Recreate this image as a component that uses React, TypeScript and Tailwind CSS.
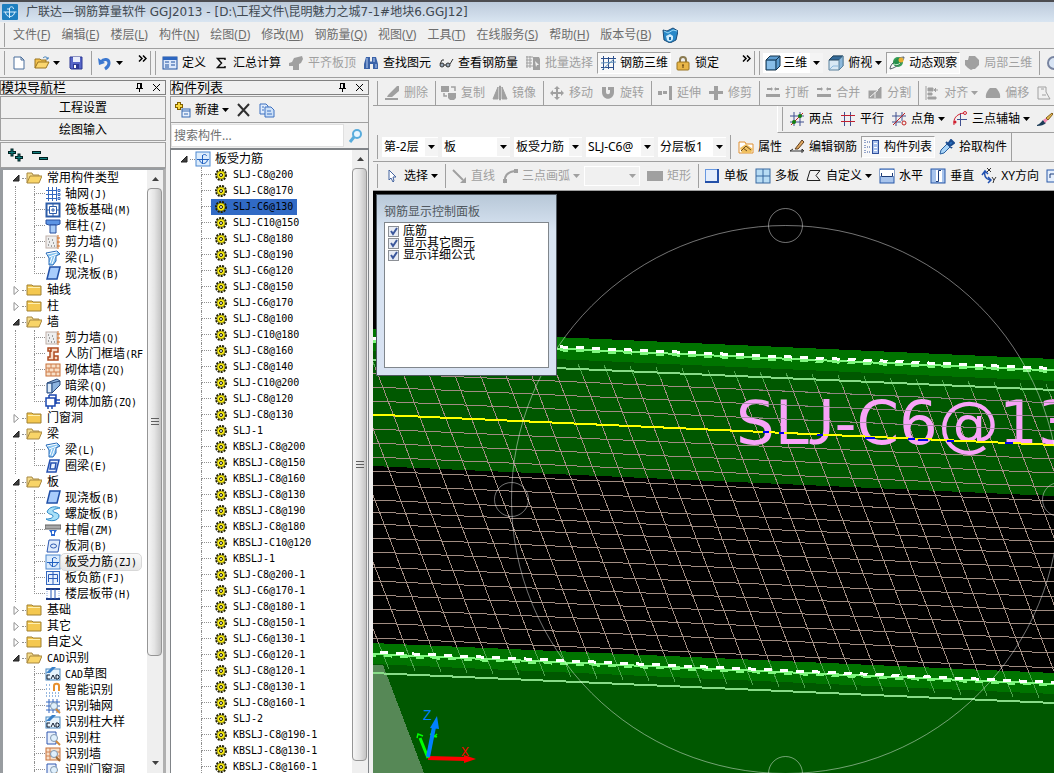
import React from "react";

type IconProps = { children: React.ReactNode };

const Svg: React.FC<IconProps> = ({ children }) => (
    <svg viewBox="0 0 16 16" className="h-4 w-4 shrink-0" fill="none" aria-hidden="true">
        {children}
    </svg>
);

// disabled toolbar grey
const G = "#a0a0a0";

const icons: Record<string, React.ReactNode> = {
    app: (
        <>
            <rect width="16" height="16" rx="1" fill="#1e7fc0" />
            <path d="M1.500 8h13M7.500 4v10M7.500 5c0-3 4-3 4 0M3.500 8c0 6 9 6 9 0M5 5h2" stroke="#d8f0ff" />
        </>
    ),
    newDoc: <path d="M3 2h7l3 3v9H3zM10 2v3h3" fill="#fff" stroke="#4a6f9c" />,
    open: (
        <>
            <path d="M1 13V4h5l1 1h5v3" fill="#f4c24c" stroke="#9a7420" />
            <path d="M1 13l3-6h11l-3 6z" fill="#fbd66e" stroke="#9a7420" />
            <path d="M9 3c2-2 4-1 5 1M14 2v2h-2" stroke="#3c7cb8" />
        </>
    ),
    save: (
        <>
            <path d="M2 2h12v12H3l-1-1z" fill="#5766c8" stroke="#2c3894" />
            <rect x="5" y="2" width="7" height="5" fill="#e8ecfa" />
            <rect x="5" y="9" width="6" height="5" fill="#2c3894" />
            <rect x="6" y="10" width="2" height="3" fill="#fff" />
        </>
    ),
    undo: (
        <>
            <path d="M4 7c3-4 8-3 8 1 0 3-1 4-4 6" stroke="#3c78d0" strokeWidth="3" />
            <path d="M1 3l1 7 6-2z" fill="#3c78d0" />
        </>
    ),
    define: (
        <>
            <rect x="1" y="2" width="14" height="12" fill="#dce8fa" stroke="#1c50a0" />
            <rect x="1" y="2" width="14" height="3" fill="#2c66c0" />
            <path d="M3 7h4M3 10h4M9 7h4M9 10h4M3 12h4" stroke="#1c50a0" />
        </>
    ),
    sigma: <path d="M12 5V3.500H4.500l4 4.500-4 4.500H12V11" stroke="#111" strokeWidth="1.500" />,
    alignTop: <path d="M1 8l3-1 2-4 8-2 1 3-2 4-2 1v6H5v-4H1z" fill={G} />,
    find: (
        <>
            <path d="M3 2h4v4l1 1 1-1V2h4l2 7v5h-5V9H7v5H1V9z" fill="#3a62a8" />
            <path d="M4 3v10M11 3v4M13 9v4" stroke="#b8d0f4" />
        </>
    ),
    glasses: (
        <>
            <circle cx="4" cy="10" r="2" fill="#9ab" stroke="#333" />
            <circle cx="10" cy="10" r="2" fill="#9ab" stroke="#333" />
            <path d="M6 10h2M2 9l2-4h2M12 9l3-5" stroke="#333" />
        </>
    ),
    batch: (
        <>
            <path d="M1 2h7M1 5h6M1 8h6M1 11h7M2 1v12M5 1v12" stroke={G} />
            <path d="M8 2h6l1 2v11H8z" fill={G} />
            <path d="M10 6l4 4h-2l-1 2z" fill="#f0f0f0" />
        </>
    ),
    rebar3d: (
        <>
            <path d="M1 3.500h15M1 12.500h13M3.500 1v14M8.500 2v12M13.500 1v14" stroke="#2c4f8c" />
            <path d="M1 8l15-1M2 15l12-11" stroke="#5c8cb8" />
        </>
    ),
    lock: (
        <>
            <path d="M5 8V5c0-4 6-4 6 0v3" stroke="#8a7a50" strokeWidth="2" />
            <rect x="2" y="7" width="12" height="8" rx="1" fill="#e8b648" stroke="#9a7420" />
            <path d="M8 10v3M7 10h2" stroke="#604010" />
        </>
    ),
    cube: (
        <>
            <path d="M1 5l4-4h10v10l-4 4H1z" fill="#5c9cd0" stroke="#14344c" />
            <path d="M1 5h10v10M11 5l4-4" stroke="#14344c" />
            <path d="M2 6h8v8H2z" fill="#88bee8" />
        </>
    ),
    cubeTop: (
        <>
            <path d="M1 5l4-4h10v10l-4 4H1z" fill="#d8e8f4" stroke="#58809c" />
            <path d="M1 5l4-4h10l-4 4z" fill="#346a98" stroke="#24445c" />
            <path d="M11 5v10l4-4V1z" fill="#8cb8dc" stroke="#58809c" />
            <path d="M2 14l3-3h5" stroke="#8cb8dc" />
        </>
    ),
    orbit: (
        <>
            <circle cx="9" cy="7" r="5" fill="#38a058" />
            <path d="M1 14C1 9 9 2 15 2c0 4-8 11-14 12z" stroke="#505c64" strokeWidth="1" />
            <path d="M4 8c1-3 4-5 7-5 1 4-1 8-5 8z" fill="#28904c" />
            <circle cx="12" cy="5" r="2.500" fill="#e8b030" />
            <path d="M5 9c2 1 4 1 6-1" stroke="#c8f4d0" />
        </>
    ),
    local3d: <path d="M5 1h6l4 4v5l-4 4H9l-2 1-3-2-3-3V5h3z" fill={G} />,
    zoomIcon: <circle cx="9" cy="8" r="6" fill="#d8e4f4" stroke="#7884a0" strokeWidth="2" />,
    del: <path d="M1 13h13v2H1zM4 10L13 1h2v5l-7 6H3z" fill={G} />,
    copy: (
        <>
            <rect x="0" y="1" width="8" height="6" fill={G} />
            <path d="M7 8h8v5l-2 2H9l-2-2z" fill={G} />
            <path d="M10 2h4v4M3 8v3h3" stroke={G} strokeWidth="1.500" />
        </>
    ),
    mirror: <path d="M6 2v12H1zM7.500 1h1v14h-1zM10 2v12h5zM11.500 8v4" fill={G} stroke={G} />,
    move: <path d="M8 1l3 3H9v3h3V5l3 3-3 3V9H9v3h2l-3 3-3-3h2V9H4v2L1 8l3-3v2h3V4H5z" fill={G} />,
    rotate: <path d="M2 2h4v5c0 3 4 3 4 0V5H8V2h6v5c0 9-12 9-12 0z" fill={G} />,
    extend: <path d="M1 6h4v4H1zM6 6h4v3H6zM12 1h3v14h-3z" fill={G} />,
    trim: <path d="M6 1h4v5h5v3h-5v6H6V9H1V6h5z" fill={G} />,
    breakI: <path d="M2 3h4V2l2 2-2 2V5H2zM14 3h-3V2L9 4l2 2V5h3zM1 9h14v3H1z" fill={G} />,
    merge: <path d="M1 3h4V2l2 2-2 2V5H1zM15 3h-3V2l-2 2 2 2V5h3zM1 9h14v3H1z" fill={G} />,
    split: <path d="M1 5h9l4-4 1 1v12H1zM3 12l8-7M8 13V7" fill={G} stroke="#f0f0f0" />,
    align: <path d="M2 1v14M4 3h5v3H4zM4 8h4v2H4zM4 12h8v2H4zM12 3l-2 2 2 2M14 5h-4" stroke={G} fill={G} />,
    offset: <path d="M1 13c-1-4 2-8 4-10h6c2 2 5 6 4 10z" fill={G} />,
    shape: <path d="M2 2h8v5l4 7H2zM5 4h3M6 10h4" stroke={G} />,
    twoPt: (
        <>
            <path d="M5 1v14M11 1v14M1 5h14M1 11h14" stroke="#405090" />
            <path d="M2 14L14 2" stroke="#c02020" />
            <circle cx="5" cy="11" r="2" fill="#108010" />
            <circle cx="11" cy="5" r="2" fill="#108010" />
        </>
    ),
    parallel: (
        <>
            <path d="M4.500 1v14M10.500 1v14" stroke="#405090" />
            <path d="M1 4.500h14M1 10.500h14" stroke="#c02030" />
        </>
    ),
    ptAngle: (
        <>
            <path d="M5 1v14M11 1v9M1 5h14M1 11h9" stroke="#405090" />
            <path d="M2 14L14 2" stroke="#c02020" />
            <circle cx="13" cy="12" r="2" stroke="#c02020" />
        </>
    ),
    arcAxis: (
        <>
            <path d="M8.500 2v13M5 8.500h10" stroke="#405090" />
            <path d="M2 14C1 8 4 3 12 2" stroke="#d02030" />
            <circle cx="3" cy="11" r="1.500" fill="#d02030" />
            <circle cx="13" cy="2" r="1.500" stroke="#d02030" />
        </>
    ),
    brush: (
        <>
            <path d="M0 14c3-1 5-4 6-5l3 3c-2 2-5 3-9 3z" fill="#1c3c58" />
            <path d="M6 9l2 3 3-3-2-2z" fill="#f088b0" />
            <path d="M9 7l2 2 5-6-1-1z" fill="#e8b850" stroke="#806020" />
        </>
    ),
    prop: (
        <>
            <path d="M1 14V3h6l1 2h7v9z" fill="#fff" stroke="#e09030" />
            <path d="M2 9l6-4 7 5-2 4H4z" fill="#f0c060" />
            <path d="M3 12l5-5 5 4M5 9l4 3" stroke="#705020" />
        </>
    ),
    edit: (
        <>
            <path d="M1 12h14l-2-2M1 12l3-2M13 10v4" stroke="#303030" />
            <path d="M6 10l7-9 2 2-6 7z" fill="#e0a860" stroke="#604020" />
        </>
    ),
    listI: (
        <>
            <path d="M3 3h3M3 8h3M3 13h3M1 1v4M1 6v4M1 11v4" stroke="#30509c" strokeDasharray="1 1" />
            <rect x="8.500" y="1.500" width="6" height="13" fill="#a8c0ec" stroke="#30509c" />
            <path d="M10 4.500h3M10 8.500h3M10 11.500h3" stroke="#fff" />
        </>
    ),
    dropper: (
        <>
            <path d="M1 15l1-4 6-6 3 3-6 6z" fill="#a8d4f8" stroke="#2860a0" />
            <path d="M7 3l6 6M9 5l3-4 3 3-4 3z" stroke="#1c4c90" strokeWidth="2" fill="#2870c0" />
        </>
    ),
    cursor: <path d="M5 2v10l2-2 2 4 1-1-1-4h3z" fill="#fff" stroke="#4464a0" />,
    lineI: (
        <>
            <path d="M2 2l10 10" stroke={G} strokeWidth="2" />
            <path d="M15 15H9l6-6z" fill={G} />
        </>
    ),
    arc: (
        <>
            <path d="M3 15C2 8 5 4 13 3" stroke={G} strokeWidth="2" />
            <path d="M1 11h4v4H1zM12 1h4v4h-4z" fill={G} />
        </>
    ),
    rectI: <rect y="3" width="16" height="10" fill={G} />,
    single: (
        <>
            <rect x="1.500" y="1.500" width="13" height="12" fill="#e4eefc" stroke="#6898e0" />
            <path d="M1 14h14M14 1v13" stroke="#2450a8" strokeWidth="2" />
        </>
    ),
    multi: (
        <>
            <rect x="1" y="1" width="14" height="14" fill="#b8dcf4" stroke="#3868a0" />
            <path d="M8 1v14M1 8h14" stroke="#3868a0" />
        </>
    ),
    poly: <path d="M1 12.500L4 2.500h10l-4 5 4 5z" stroke="#202020" />,
    horiz: (
        <>
            <rect x="1" y="1" width="14" height="14" fill="#a8c4ec" stroke="#2858a8" />
            <path d="M1 2h14v6H1z" fill="#fff" />
            <path d="M2.500 5v3.500h11V5" stroke="#1c3c78" />
        </>
    ),
    vert: (
        <>
            <rect x="1" y="1" width="14" height="14" fill="#a8c4ec" stroke="#2858a8" />
            <path d="M6 2h6v12H6z" fill="#fff" />
            <path d="M11 2.500H8.500v11H6" stroke="#1c3c78" />
        </>
    ),
    xy: (
        <>
            <path d="M4 3c-1 4 0 8 5 9M1 7l3-4 3 3M7 9l3 3-3 3" stroke="#2050b0" strokeWidth="1.500" />
            <path d="M6 0l4 4M10 0L6 4M11 9l2 3 2-3M13 12l-1 3" stroke="#333" />
        </>
    ),
    loop: (
        <>
            <rect x="1" y="2" width="14" height="12" fill="#e4eefc" stroke="#2858a8" />
            <path d="M4 10V6h10" stroke="#1c3c78" />
        </>
    ),
    folderOpen: (
        <>
            <path d="M1 13V3h5l1 2h6v2" fill="#f4dc8c" stroke="#a88840" />
            <path d="M1 13l3-7h12l-3 7z" fill="#f8d468" stroke="#a88840" />
        </>
    ),
    folder: (
        <>
            <path d="M1 13V3h5l1 1h8v9z" fill="#f4c850" stroke="#a08030" />
            <path d="M2 5.500h12" stroke="#fff0b0" />
        </>
    ),
    axis: (
        <path
            d="M3.500 1v14M7.500 1v14M11.500 1v14M1 4.500h11M1 8.500h11M1 12.500h11M13 3.500h2v2h-2zM13 7.500h2v2h-2zM13 11.500h2v2h-2z"
            stroke="#3468c0"
        />
    ),
    raft: (
        <>
            <rect x="1.500" y="1.500" width="13" height="13" fill="#fff" stroke="#2c5ca8" strokeWidth="2" />
            <path d="M4.500 4.500h7v7h-7zM7 7h2v2H7zM8 1v3M8 12v3M1 8h3M12 8h3" stroke="#2c5ca8" />
        </>
    ),
    column: (
        <>
            <path d="M1 2h14v4l-3 1H4L1 6z" fill="#5c94e4" stroke="#2850a0" />
            <path d="M5 7h6v8H5z" fill="#a8ccf8" stroke="#2850a0" />
        </>
    ),
    shear: (
        <>
            <rect x="1" y="2" width="11" height="12" fill="#eee" stroke="#c0b0a8" />
            <path d="M3 11h1M6 12h1M8 9h1M4 8h1M9 12h1M3 5h1M7 6h1" stroke="#505050" />
            <path d="M13 1v14M12 4h3M12 8h3M12 12h3" stroke="#d07028" />
        </>
    ),
    beam: (
        <>
            <path d="M1 3l11-2 3 3-4 2v5l-3 4H4V8z" fill="#88c4f0" stroke="#2c6cb8" />
            <path d="M2 4l10-2M4 7l8-3M7 7l-2 6M10 6l-3 8" stroke="#fff" />
        </>
    ),
    slab: <path d="M5 1h10l-3 12H2z" fill="#a8ccfc" stroke="#2050a8" strokeWidth="1.500" />,
    door: (
        <path d="M3 2h10v4H9v4h4v4H3v-3h2V5H3zM6 2v4M9 10v4" fill="#f8dcc8" stroke="#b04c20" strokeWidth="1.500" />
    ),
    brick: (
        <>
            <rect x="1" y="2" width="14" height="12" fill="#f8e0c8" stroke="#c87038" />
            <path d="M1 6h14M1 10h14M6 2v4M11 2v4M4 6v4M9 6v4M6 10v4M11 10v4" stroke="#d08050" />
        </>
    ),
    hidden: (
        <>
            <path d="M2 5l10-4 3 2v4l-8 8H2z" fill="#8cb4e0" stroke="#284878" />
            <path d="M2 5h5v10M7 5l8-2" stroke="#284878" />
            <path d="M3 6h3v8H3z" fill="#e0ecf8" />
        </>
    ),
    rebarWall: (
        <path d="M1 4h9v8H1zM4 1h7v9M4 1v3M10 6h5M10 9h5M3 12v3M7 12v3" stroke="#1c48b0" strokeWidth="1.500" />
    ),
    ring: <path d="M5 2h9l-3 12H2zM6 5h5l-1 6H5z" fill="#e8f0ff" stroke="#2450b0" strokeWidth="1.500" />,
    spiral: (
        <path
            d="M2 6c2-6 9-6 13-4-4 1-7 1-7 3s6 1 6 5c0 5-9 6-13 3 4 0 7-1 7-3s-4-1-6-4z"
            fill="#a8e0f8"
            stroke="#2c88c8"
        />
    ),
    cap: (
        <>
            <path d="M0 3h16v4H0z" fill="#a8a8a8" stroke="#606060" />
            <path d="M4 8h8l-2 3v3H6v-3z" fill="#2c68d0" />
            <path d="M7 9h2v3H7z" fill="#fff" />
        </>
    ),
    hole: (
        <>
            <path d="M4 2h11l-2 12H2z" fill="#e0ecfc" stroke="#2c58b0" />
            <ellipse cx="8.500" cy="8" rx="3" ry="2" stroke="#2c58b0" />
        </>
    ),
    force: (
        <>
            <rect x="1" y="1" width="14" height="14" fill="#dcecfc" stroke="#4c88d0" />
            <path d="M2 8.500h12M7.500 4v9M7.500 5c0-2 4-2 4 0M4.500 8c0 6 8 6 8 0" stroke="#2060c0" />
        </>
    ),
    negative: (
        <>
            <rect x="1.500" y="1.500" width="13" height="13" fill="#e8f2fe" stroke="#3468c0" />
            <path d="M8 2v12M3.500 12V4.500h9V12M3 8.500h10" stroke="#2c5cb8" />
        </>
    ),
    strip: (
        <>
            <path d="M1 3h14M1 13h14" stroke="#1c3c88" strokeWidth="2" />
            <path d="M6 3v10M10 3v10" stroke="#2c5cb8" />
            <path d="M2 5v8M14 5v8" stroke="#88a8e0" strokeDasharray="1 1" />
        </>
    ),
    cad: (
        <>
            <rect x="1" y="3" width="14" height="11" fill="#e8f4fc" stroke="#4888c0" />
            <path d="M1 7L7 1h4L5 7z" fill="#3880c8" />
            <path d="M5 9H2v4h3M6 13l2-4 2 4M11 9v4h2l1-1v-2l-1-1z" stroke="#101c30" />
        </>
    ),
    smart: (
        <>
            <path d="M1 3h6M1 7h6M1 11h14M1 14h14" stroke="#2c70c0" strokeDasharray="1 2" />
            <path d="M9 9V4c0-3 5-3 5 0v5" stroke="#e8902c" strokeWidth="2" />
        </>
    ),
    idAxis: (
        <>
            <path d="M4 1v14M8 1v14M12 1v14M1 4h14M1 8h14M1 12h14" stroke="#3468c0" />
            <circle cx="9" cy="8" r="3.500" fill="#e0f0fc" stroke="#8098b0" />
            <path d="M11 11l4 4" stroke="#d08838" strokeWidth="2" />
        </>
    ),
    idCol: (
        <>
            <path d="M2 2h9v12H2z" fill="#e8f0fc" stroke="#3058b0" />
            <circle cx="9" cy="8" r="3.500" fill="#e0f0fc" stroke="#8098b0" />
            <path d="M11 11l4 4" stroke="#d08838" strokeWidth="2" />
        </>
    ),
    idWall: (
        <>
            <rect x="1" y="2" width="14" height="12" fill="#f8e0c8" stroke="#c87038" />
            <path d="M1 6h14M1 10h14M5 2v12" stroke="#d08050" />
            <circle cx="9" cy="8" r="3.500" fill="#e0f0fc" stroke="#8098b0" />
            <path d="M11 11l4 4" stroke="#a06830" strokeWidth="2" />
        </>
    ),
    create: (
        <>
            <path d="M4 0v8M0 4h8" stroke="#806000" strokeWidth="4" />
            <path d="M4 1v6M1 4h6" stroke="#f8d840" strokeWidth="2" />
            <rect x="7" y="7" width="8" height="8" fill="#e8f0fc" stroke="#3468b0" />
            <path d="M7 9h8M9 12h4" stroke="#3468b0" />
        </>
    ),
    cross: <path d="M2 2l11 12M13 2L2 14" stroke="#303030" strokeWidth="2" />,
    dup: (
        <>
            <path d="M1 2h6l2 2v8H1z" fill="#e0ecfc" stroke="#3c70c0" />
            <path d="M6 5h6l3 3v7H6z" fill="#cce0f8" stroke="#3c70c0" />
            <path d="M8 9h4M8 12h5M3 5h2M3 8h2" stroke="#3c70c0" />
        </>
    ),
    search: (
        <>
            <circle cx="9" cy="6" r="4" stroke="#58acdc" strokeWidth="2" fill="#e8f6ff" />
            <path d="M6 9l-4 5" stroke="#58acdc" strokeWidth="3" />
        </>
    ),
    help: (
        <>
            <path d="M1 3l4 1 6-3 5 3-2 9-6 3-6-3z" fill="#2888c8" stroke="#1c4c78" />
            <path d="M2 4l4 2 5-3 4 1" stroke="#98d8f8" />
            <path d="M4 9l4-2 3 2v3c-1 3-5 3-6 1z" fill="#d0ecfc" />
            <path d="M8 10v3" stroke="#1c6ca8" strokeWidth="2" />
        </>
    ),
};

const Icon: React.FC<{ name: string }> = ({ name }) => <Svg>{icons[name]}</Svg>;

const Caret: React.FC<{ muted?: boolean }> = ({ muted }) => (
    <svg viewBox="0 0 7 4" className={muted ? "h-1 w-[7px] shrink-0 text-[#a0a0a0]" : "h-1 w-[7px] shrink-0"} aria-hidden="true">
        <path d="M0 0h7L3.500 4z" fill="currentColor" />
    </svg>
);

const Grip = () => <div className="mr-[3px] ml-1 h-6 w-px shrink-0 bg-[#a0a0a0]" />;
const Sep = () => <div className="mr-[2px] ml-[3px] h-6 w-px shrink-0 bg-[#a0a0a0]" />;

const More = () => (
    <span className="flex h-6 w-4 shrink-0 items-start justify-center border-r border-[#a0a0a0]">
        <svg viewBox="0 0 9 7" className="mt-1 h-[7px] w-[9px]" fill="none" stroke="#000" strokeWidth="1.500" aria-hidden="true">
            <path d="M1 .5l3 3-3 3M5 .5l3 3-3 3" />
        </svg>
    </span>
);

const Tool: React.FC<{
    icon: string;
    text?: string;
    off?: boolean;
    on?: boolean;
    caret?: boolean;
}> = ({ icon, text, off, on, caret }) => {
    let cls = "mr-px flex h-[22px] shrink-0 items-center border px-[2px] whitespace-nowrap";
    cls += on ? " border-t-[#a0a0a0] border-r-white border-b-white border-l-[#a0a0a0] bg-[#f8f8f8]" : " border-transparent";
    if (off) cls += " text-[#a0a0a0]";
    return (
        <button type="button" className={cls} disabled={off} aria-label={text || icon}>
            <Icon name={icon} />
            {text && <span className="ml-1">{text}</span>}
            {caret && (
                <span className="ml-[3px]">
                    <Caret muted={off} />
                </span>
            )}
        </button>
    );
};

const Combo: React.FC<{ label: string; value: string; wide?: boolean; off?: boolean }> = ({ label, value, wide, off }) => (
    <div
        className={
            "mr-1 flex h-5 shrink-0 items-center " +
            (wide ? "w-[68px] " : "w-14 ") +
            (off ? "border border-white bg-[#f0f0f0]" : "bg-white")
        }
    >
        <select
            aria-label={label}
            disabled={off}
            className="h-5 min-w-0 flex-1 appearance-none overflow-hidden bg-transparent pl-[2px] text-xs outline-none"
        >
            <option>{value}</option>
        </select>
        <span className={"flex h-[18px] w-[13px] items-center justify-center " + (off ? "" : "bg-[#f4f4f4]")}>
            <Caret muted={off} />
        </span>
    </div>
);

const menus = [
    ["文件", "F"],
    ["编辑", "E"],
    ["楼层", "L"],
    ["构件", "N"],
    ["绘图", "D"],
    ["修改", "M"],
    ["钢筋量", "Q"],
    ["视图", "V"],
    ["工具", "T"],
    ["在线服务", "S"],
    ["帮助", "H"],
    ["版本号", "B"],
];

const PanelTitle: React.FC<{ text: string }> = ({ text }) => (
    <div className="flex h-[15px] shrink-0 items-center border border-[#808080] text-[13px] leading-[13px] text-black">
        <h2 className="flex-1">{text}</h2>
        <button type="button" aria-label="pin" className="mr-2">
            <svg viewBox="0 0 9 11" className="h-[11px] w-[9px]" stroke="#000" fill="none">
                <path d="M2.500 1v5M6.500 1v5M2 1.500h4M1 6.500h7M4.500 7v3M5.500 1v5" />
            </svg>
        </button>
        <button type="button" aria-label="close" className="mr-1">
            <svg viewBox="0 0 9 9" className="h-[9px] w-[9px]" stroke="#000" fill="none">
                <path d="M1 1l7 7M8 1L1 8" />
            </svg>
        </button>
    </div>
);

const Scrollbar: React.FC<{ toEnd?: boolean }> = ({ toEnd }) => (
    <div className="flex w-4 shrink-0 flex-col bg-[#efefef]" aria-hidden="true">
        <div className="flex h-[18px] items-center justify-center">
            <svg viewBox="0 0 7 4" className="h-1 w-[7px]">
                <path d="M0 4h7L3.500 0z" fill="#404040" />
            </svg>
        </div>
        <div
            className={
                "flex w-[15px] flex-col items-center justify-center gap-px rounded-sm border border-[#959595] bg-linear-to-r from-[#f6f6f6] via-[#e4e4e4] to-[#c4c4c4] " +
                (toEnd ? "grow" : "grow-[465]")
            }
        >
            <span className="mb-px h-px w-2 bg-[#606060]" />
            <span className="mb-px h-px w-2 bg-[#606060]" />
            <span className="mb-px h-px w-2 bg-[#606060]" />
        </div>
        {!toEnd && <div className="grow-[103]" />}
        <div className={"flex justify-center " + (toEnd ? "h-3" : "h-4 items-center pb-1")}>
            {!toEnd && (
                <svg viewBox="0 0 7 4" className="h-1 w-[7px]">
                    <path d="M0 0h7L3.500 4z" fill="#404040" />
                </svg>
            )}
        </div>
    </div>
);

type Leaf = { icon: string; text: string; latin?: string; key?: string; selected?: boolean };
type Group = { text: string; latin?: string; items?: Leaf[]; last?: boolean };

const tree: Group[] = [
    {
        text: "常用构件类型",
        items: [
            { icon: "axis", text: "轴网", key: "(J)" },
            { icon: "raft", text: "筏板基础", key: "(M)" },
            { icon: "column", text: "框柱", key: "(Z)" },
            { icon: "shear", text: "剪力墙", key: "(Q)" },
            { icon: "beam", text: "梁", key: "(L)" },
            { icon: "slab", text: "现浇板", key: "(B)" },
        ],
    },
    { text: "轴线" },
    { text: "柱" },
    {
        text: "墙",
        items: [
            { icon: "shear", text: "剪力墙", key: "(Q)" },
            { icon: "door", text: "人防门框墙", key: "(RF" },
            { icon: "brick", text: "砌体墙", key: "(ZQ)" },
            { icon: "hidden", text: "暗梁", key: "(Q)" },
            { icon: "rebarWall", text: "砌体加筋", key: "(ZQ)" },
        ],
    },
    { text: "门窗洞" },
    {
        text: "梁",
        items: [
            { icon: "beam", text: "梁", key: "(L)" },
            { icon: "ring", text: "圈梁", key: "(E)" },
        ],
    },
    {
        text: "板",
        items: [
            { icon: "slab", text: "现浇板", key: "(B)" },
            { icon: "spiral", text: "螺旋板", key: "(B)" },
            { icon: "cap", text: "柱帽", key: "(ZM)" },
            { icon: "hole", text: "板洞", key: "(B)" },
            { icon: "force", text: "板受力筋", key: "(ZJ)", selected: true },
            { icon: "negative", text: "板负筋", key: "(FJ)" },
            { icon: "strip", text: "楼层板带", key: "(H)" },
        ],
    },
    { text: "基础" },
    { text: "其它" },
    { text: "自定义" },
    {
        text: "识别",
        latin: "CAD",
        last: true,
        items: [
            { icon: "cad", text: "草图", latin: "CAD" },
            { icon: "smart", text: "智能识别" },
            { icon: "idAxis", text: "识别轴网" },
            { icon: "cad", text: "识别柱大样" },
            { icon: "idCol", text: "识别柱" },
            { icon: "idWall", text: "识别墙" },
            { icon: "idCol", text: "识别门窗洞" },
        ],
    },
];

const parts = [
    "SLJ-C8@200",
    "SLJ-C8@170",
    "SLJ-C6@130",
    "SLJ-C10@150",
    "SLJ-C8@180",
    "SLJ-C8@190",
    "SLJ-C6@120",
    "SLJ-C8@150",
    "SLJ-C6@170",
    "SLJ-C8@100",
    "SLJ-C10@180",
    "SLJ-C8@160",
    "SLJ-C8@140",
    "SLJ-C10@200",
    "SLJ-C8@120",
    "SLJ-C8@130",
    "SLJ-1",
    "KBSLJ-C8@200",
    "KBSLJ-C8@150",
    "KBSLJ-C8@160",
    "KBSLJ-C8@130",
    "KBSLJ-C8@190",
    "KBSLJ-C8@180",
    "KBSLJ-C10@120",
    "KBSLJ-1",
    "SLJ-C8@200-1",
    "SLJ-C6@170-1",
    "SLJ-C8@180-1",
    "SLJ-C8@150-1",
    "SLJ-C6@130-1",
    "SLJ-C6@120-1",
    "SLJ-C8@120-1",
    "SLJ-C8@130-1",
    "SLJ-C8@160-1",
    "SLJ-2",
    "KBSLJ-C8@190-1",
    "KBSLJ-C8@130-1",
    "KBSLJ-C8@160-1",
];

// dotted branch to the left of a tree node
const Elbow: React.FC<{ last?: boolean; narrow?: boolean }> = ({ last, narrow }) => (
    <span className={"flex h-4 shrink-0 flex-col " + (narrow ? "w-[10px]" : "w-[11px]")}>
        <span className="h-2 border-b border-l border-dotted border-[#909090]" />
        <span className={"h-2 border-dotted border-[#909090] " + (last ? "" : "border-l")} />
    </span>
);

const Expander: React.FC<{ open?: boolean }> = ({ open }) => (
    <svg viewBox="0 0 11 11" className="h-[11px] w-[11px] shrink-0" aria-hidden="true">
        {open ? <path d="M8 2v6H2z" fill="#404040" stroke="#202020" /> : <path d="M3 1.500v8l4.500-4z" fill="#fff" stroke="#909090" />}
    </svg>
);

const Latin: React.FC<{ text: string }> = ({ text }) => (
    <span className="font-['DejaVu_Sans_Mono',monospace] text-[10px]">{text}</span>
);

const TreeGroup: React.FC<{ group: Group }> = ({ group }) => (
    <li>
        <div className="flex h-4 items-center pl-2">
            <Expander open={!!group.items} />
            <span className="w-1 shrink-0 border-b border-dotted border-[#909090]" />
            <Icon name={group.items ? "folderOpen" : "folder"} />
            <span className="px-[5px]">
                {group.latin && <Latin text={group.latin} />}
                {group.text}
            </span>
        </div>
        {group.items && (
            <ul>
                {group.items.map((leaf, i) => (
                    <li key={i} className="flex h-4 items-center pl-3">
                        <span className={"h-4 w-[19px] shrink-0 border-dotted border-[#909090] " + (group.last ? "" : "border-l")} />
                        <Elbow last={!group.last && i === group.items!.length - 1} />
                        <Icon name={leaf.icon} />
                        <span
                            className={
                                leaf.selected
                                    ? "h-4 rounded-sm bg-linear-to-b from-[#fafafa] to-[#e6e6e6] px-1 outline outline-[#d8d8d8]"
                                    : "px-1"
                            }
                        >
                            {leaf.latin && <Latin text={leaf.latin} />}
                            {leaf.text}
                            {leaf.key && <Latin text={leaf.key} />}
                        </span>
                    </li>
                ))}
            </ul>
        )}
    </li>
);

const Gear = () => (
    <svg viewBox="0 0 12 12" className="h-3 w-3 shrink-0" fill="none" aria-hidden="true">
        <circle cx="6" cy="6" r="5" stroke="#202000" strokeWidth="2" strokeDasharray="2 1" />
        <circle cx="6" cy="6" r="4" fill="#f8ec10" stroke="#504c00" strokeWidth="0.500" />
        <circle cx="6" cy="6" r="1.500" fill="#fff" stroke="#202000" />
    </svg>
);

const NavPanel = () => (
    <aside className="flex w-[166px] shrink-0 flex-col">
        <PanelTitle text="模块导航栏" />
        <button type="button" className="mt-px h-[23px] shrink-0 border border-[#a0a0a0] bg-[#f0f0f0]">
            工程设置
        </button>
        <button type="button" className="h-[22px] shrink-0 border border-t-0 border-[#a0a0a0] bg-[#f0f0f0]">
            绘图输入
        </button>
        <div className="mt-px flex h-[26px] shrink-0 items-center gap-2 border border-[#a0a0a0] pl-1.5">
            <button type="button" aria-label="展开">
                <svg viewBox="0 0 17 14" className="h-[14px] w-[17px]" fill="none">
                    <path d="M1 4.500h8M5 .5v8M8 9.500h8M12 5.500v8" stroke="#002020" strokeWidth="3" />
                    <path d="M2 4.500h6M5 1.500v6M9 9.500h6M12 6.500v6" stroke="#108080" />
                </svg>
            </button>
            <button type="button" aria-label="折叠">
                <svg viewBox="0 0 17 14" className="h-[14px] w-[17px]" fill="none">
                    <path d="M0 4.500h9M7 10.500h9" stroke="#002020" strokeWidth="3" />
                    <path d="M1 4.500h7M8 10.500h7" stroke="#108080" />
                </svg>
            </button>
        </div>
        <div className="flex min-h-0 flex-1 border-x-[3px] border-t-2 border-[#989ca0] border-r-[#b0b0b0] bg-white">
            <ul className="min-w-0 flex-1 overflow-hidden whitespace-nowrap text-black">
                {tree.map((group) => (
                    <TreeGroup key={group.text + group.last} group={group} />
                ))}
            </ul>
            <Scrollbar />
        </div>
    </aside>
);

const PartsPanel = () => (
    <aside className="flex w-[199px] shrink-0 flex-col">
        <PanelTitle text="构件列表" />
        <div className="mt-px flex h-[27px] shrink-0 items-center border border-[#a0a0a0] pl-px">
            <Tool icon="create" text="新建" caret />
            <Tool icon="cross" />
            <Tool icon="dup" />
        </div>
        <div className="flex h-[25px] shrink-0 items-center border-x border-[#a0a0a0]">
            <input
                type="text"
                aria-label="搜索构件"
                placeholder="搜索构件..."
                className="h-[23px] min-w-0 flex-1 border border-[#e0e0e0] bg-white pl-[2px] text-xs outline-none placeholder:text-[#707070]"
            />
            <button type="button" aria-label="搜索" className="flex w-6 items-center justify-center">
                <Icon name="search" />
            </button>
        </div>
        <div className="flex min-h-0 flex-1 border-x border-t-2 border-[#808488] bg-white">
            <div className="min-w-0 flex-1 overflow-hidden text-black">
                <div className="mt-px flex h-4 items-center pl-2">
                    <Expander open />
                    <span className="w-[5px] border-b border-dotted border-[#909090]" />
                    <Icon name="force" />
                    <span className="pl-1">板受力筋</span>
                </div>
                <ul>
                    {parts.map((name) => (
                        <li key={name} className="flex h-4 items-center pl-[30px]">
                            <Elbow narrow />
                            <button
                                type="button"
                                className={
                                    "flex h-4 items-center gap-1.5 pr-1 pl-1 whitespace-nowrap " +
                                    (name === "SLJ-C6@130" ? "bg-[#316ac5]" : "")
                                }
                            >
                                <Gear />
                                <Latin text={name} />
                            </button>
                        </li>
                    ))}
                </ul>
            </div>
            <Scrollbar toEnd />
        </div>
    </aside>
);

const gridYs = [373, 387, 401, 429, 443, 457, 471, 485, 500, 512, 524, 538, 552, 567, 581, 595, 609, 623, 638];
const barIndexes = Array.from({ length: 40 }, (_, i) => i - 16);

// model view: two slab beams, the mesh of bars between them and the orbit ring
const Viewport = () => (
    <svg
        viewBox="373 191 681 582"
        preserveAspectRatio="xMinYMin slice"
        className="h-full w-full bg-black"
        fill="none"
        role="img"
        aria-label="钢筋三维"
    >
        <g shapeRendering="crispEdges">
            <path d="M373 329l681 30v137L373 466z" fill="#005800" />
            <path d="M373 329l681 30v22L373 351z" fill="#007400" />
            <path d="M373 643l681 30v100H373z" fill="#005800" />
            <path d="M373 643l681 30v21L373 664z" fill="#007400" />
            <path d="M373 665h10l41 108h-51z" fill="#568856" />
            <g stroke="#a08c82">
                {gridYs.map((y) => (
                    <path key={y} d={`M373 ${y}l681 30`} />
                ))}
                {barIndexes.map((k) => (
                    <path key={k} d={`M${583 + 26 * k} ${376 + k * 1.14}l108 282`} />
                ))}
            </g>
            <g stroke="#4ca44c">
                {barIndexes.map((k) => (
                    <path key={k} d={`M${578 + 26 * k} ${364 + k * 1.14}l5 12M${691 + 26 * k} ${658 + k * 1.14}l10 25`} />
                ))}
            </g>
            <path d="M373 360l681 30M373 673l681 30" stroke="#88dc88" strokeWidth="2" />
            <path d="M373 340.500l681 30M373 654l681 30" stroke="#80f880" strokeWidth="2" />
            <path d="M368 341.500l686 30M368 655l686 30" stroke="#80f880" strokeWidth="3" strokeDasharray="8 8" />
            <path d="M368 338.500l686 30M380 652.500l674 30" stroke="#fff" strokeWidth="3" strokeDasharray="8 8" />
        </g>
        <text x="736" y="444" fill="#f8a4f8" className="font-['DejaVu_Sans',sans-serif] text-[61px]">
            SL<tspan className="font-['Lato',sans-serif]">J</tspan>-C6@130
        </text>
        <g shapeRendering="crispEdges">
            <path d="M740 389l314 14M740 403l314 14M740 417l314 14" stroke="#808080" strokeOpacity="0.6" />
            <path d="M373 414.500l681 30.500" stroke="#ff0" strokeWidth="2" />
            <path
                d="M763 432h6M779 433h5M817 435h6M865 437.500h10M908 439h7M918 440h10M947 441h7M1005 443h8"
                stroke="#0000f0"
                strokeWidth="2"
            />
        </g>
        <g stroke="#fff" strokeOpacity="0.45">
            <circle cx="785.500" cy="499.500" r="274" />
            <circle cx="785.500" cy="225.500" r="17" />
            <circle cx="511.500" cy="499.500" r="17" />
            <circle cx="1059.500" cy="499.500" r="17" />
            <circle cx="785.500" cy="773.500" r="17" />
        </g>
        <path d="M428 758l38 1" stroke="#f00" strokeWidth="4" />
        <path d="M464 755v8l12-4z" fill="#f00" />
        <path d="M428 758l-8-20" stroke="#0f0" strokeWidth="3" />
        <path d="M417 738l1-4 5 2M430 734l7 3M434 737l3-3" stroke="#0f0" strokeWidth="1.500" />
        <path d="M428 757l6-30" stroke="#0080ff" strokeWidth="4" />
        <path d="M430 728l9 1-2-13z" fill="#0080ff" />
        <text x="423" y="720" fill="#0080ff" className="font-['Liberation_Sans',sans-serif] text-[14px]">
            Z
        </text>
        <text x="461" y="756" fill="#f00" className="font-['Liberation_Sans',sans-serif] text-[12px]">
            X
        </text>
    </svg>
);

const DisplayPanel = () => (
    <section className="absolute top-[3px] left-[3px] flex h-[182px] w-[181px] flex-col border border-[#505860] bg-linear-to-b from-[#b8c8d8] via-[#d8e4f2] via-20% to-[#d8e2f2] px-[7px] pb-[7px]">
        <h2 className="flex h-[27px] items-end leading-5 text-[#505860]">钢筋显示控制面板</h2>
        <div className="flex-1 border border-[#80868c] bg-white pt-[2px] pl-[3px] text-black">
            {["底筋", "显示其它图元", "显示详细公式"].map((text) => (
                <label key={text} className="flex h-3 items-center gap-1 leading-3">
                    <span className="relative flex">
                        <input
                            type="checkbox"
                            defaultChecked
                            className="peer h-[11px] w-[11px] appearance-none border border-[#8c9096] bg-[#e8ecf4]"
                        />
                        <svg
                            viewBox="0 0 11 11"
                            className="pointer-events-none absolute inset-0 hidden h-[11px] w-[11px] peer-checked:block"
                            fill="none"
                        >
                            <path d="M3 5l2 3 4-6" stroke="#3c589c" strokeWidth="2" />
                        </svg>
                    </span>
                    {text}
                </label>
            ))}
        </div>
    </section>
);

export default function App() {
    return (
        <div className="flex h-screen flex-col overflow-hidden bg-[#f0f0f0] font-['Noto_Sans','Noto_Sans_CJK_SC',sans-serif] text-xs text-black">
            <header className="flex h-[22px] shrink-0 items-center gap-2 border-t-2 border-[#4c4c50] bg-linear-to-b from-[#bccadb] to-[#d9e5f1] pl-[2px]">
                <Icon name="app" />
                <h1 className="font-['DejaVu_Sans','Noto_Sans_CJK_SC',sans-serif] whitespace-nowrap text-[#404850]">
                    广联达—钢筋算量软件 GGJ2013 - [D:\工程文件\昆明魅力之城7-1#地块6.GGJ12]
                </h1>
            </header>
            <nav className="flex h-[27px] shrink-0 items-center border-b border-[#a0a0a0] whitespace-nowrap text-[#6d6d6d]">
                <div className="mr-1 ml-1 h-6 w-px shrink-0 bg-[#a0a0a0]" />
                {menus.map(([text, key]) => (
                    <button key={key} type="button" className="mr-[3px] px-1">
                        {text}(<u>{key}</u>)
                    </button>
                ))}
                <div className="ml-1">
                    <Icon name="help" />
                </div>
            </nav>
            <div className="flex h-[29px] shrink-0 items-center border-b border-[#a0a0a0]">
                <Grip />
                <Tool icon="newDoc" />
                <Tool icon="open" caret />
                <div className="w-px shrink-0" />
                <Tool icon="save" />
                <Sep />
                <Tool icon="undo" caret />
                <div className="w-2 shrink-0" />
                <More />
                <Grip />
                <Tool icon="define" text="定义" />
                <Tool icon="sigma" text="汇总计算" />
                <Tool icon="alignTop" text="平齐板顶" off />
                <Tool icon="find" text="查找图元" />
                <Tool icon="glasses" text="查看钢筋量" />
                <Tool icon="batch" text="批量选择" off />
                <Tool icon="rebar3d" text="钢筋三维" on />
                <Tool icon="lock" text="锁定" />
                <div className="w-4 shrink-0" />
                <More />
                <Grip />
                <div className="mr-[2px] flex h-5 w-[60px] shrink-0 items-center bg-white pl-[2px]">
                    <Icon name="cube" />
                    <select aria-label="视图模式" className="h-5 min-w-0 flex-1 appearance-none overflow-hidden bg-transparent pl-[2px] text-xs">
                        <option>三维</option>
                    </select>
                    <span className="flex h-5 w-[13px] items-center justify-center bg-[#f4f4f4]">
                        <Caret />
                    </span>
                </div>
                <Tool icon="cubeTop" text="俯视" caret />
                <Tool icon="orbit" text="动态观察" on />
                <Tool icon="local3d" text="局部三维" off />
                <Sep />
                <Tool icon="zoomIcon" />
            </div>
            <div className="flex min-h-0 flex-1 pt-[2px]">
                <NavPanel />
                <div className="w-1 shrink-0" />
                <PartsPanel />
                <main className="flex min-w-0 flex-1 flex-col pl-1">
                    <div className="flex h-[26px] shrink-0 items-center overflow-hidden border-b border-[#a0a0a0]">
                        <Grip />
                        <Tool icon="del" text="删除" off />
                        <Sep />
                        <Tool icon="copy" text="复制" off />
                        <Tool icon="mirror" text="镜像" off />
                        <Sep />
                        <Tool icon="move" text="移动" off />
                        <Tool icon="rotate" text="旋转" off />
                        <Sep />
                        <Tool icon="extend" text="延伸" off />
                        <Tool icon="trim" text="修剪" off />
                        <Sep />
                        <Tool icon="breakI" text="打断" off />
                        <Tool icon="merge" text="合并" off />
                        <Tool icon="split" text="分割" off />
                        <Sep />
                        <Tool icon="align" text="对齐" off caret />
                        <Tool icon="offset" text="偏移" off />
                        <Tool icon="shape" off />
                    </div>
                    <div className="flex h-[27px] shrink-0 justify-end overflow-hidden">
                        <div className="flex w-[277px] items-center border-b border-l border-b-[#a0a0a0] border-l-white">
                            <Grip />
                            <Tool icon="twoPt" text="两点" />
                            <Tool icon="parallel" text="平行" />
                            <Tool icon="ptAngle" text="点角" caret />
                            <Tool icon="arcAxis" text="三点辅轴" caret />
                            <Tool icon="brush" />
                        </div>
                    </div>
                    <div className="flex h-[29px] shrink-0 items-center border-b border-[#a0a0a0]">
                        <Grip />
                        <div className="w-px shrink-0" />
                        <Combo label="楼层" value="第-2层" />
                        <Combo label="构件类型" value="板" wide />
                        <Combo label="构件种类" value="板受力筋" wide />
                        <Combo label="构件" value="SLJ-C6@" wide />
                        <Combo label="分层" value="分层板1" wide />
                        <div className="mr-1 h-6 w-px shrink-0 bg-[#a0a0a0]" />
                        <Tool icon="prop" text="属性" />
                        <Tool icon="edit" text="编辑钢筋" />
                        <Tool icon="listI" text="构件列表" on />
                        <Tool icon="dropper" text="拾取构件" />
                        <div className="h-7 w-px shrink-0 bg-[#a0a0a0]" />
                    </div>
                    <div className="flex h-[29px] shrink-0 items-center overflow-hidden border-b border-[#a0a0a0]">
                        <Grip />
                        <Tool icon="cursor" text="选择" caret />
                        <Sep />
                        <Tool icon="lineI" text="直线" off />
                        <Tool icon="arc" text="三点画弧" off caret />
                        <Combo label="画弧方式" value="" off />
                        <Tool icon="rectI" text="矩形" off />
                        <Sep />
                        <Tool icon="single" text="单板" />
                        <Tool icon="multi" text="多板" />
                        <Tool icon="poly" text="自定义" caret />
                        <Tool icon="horiz" text="水平" />
                        <Tool icon="vert" text="垂直" />
                        <Tool icon="xy" text="XY方向" />
                        <Tool icon="loop" />
                    </div>
                    <div className="relative min-h-0 flex-1 overflow-hidden">
                        <Viewport />
                        <DisplayPanel />
                    </div>
                </main>
            </div>
        </div>
    );
}
